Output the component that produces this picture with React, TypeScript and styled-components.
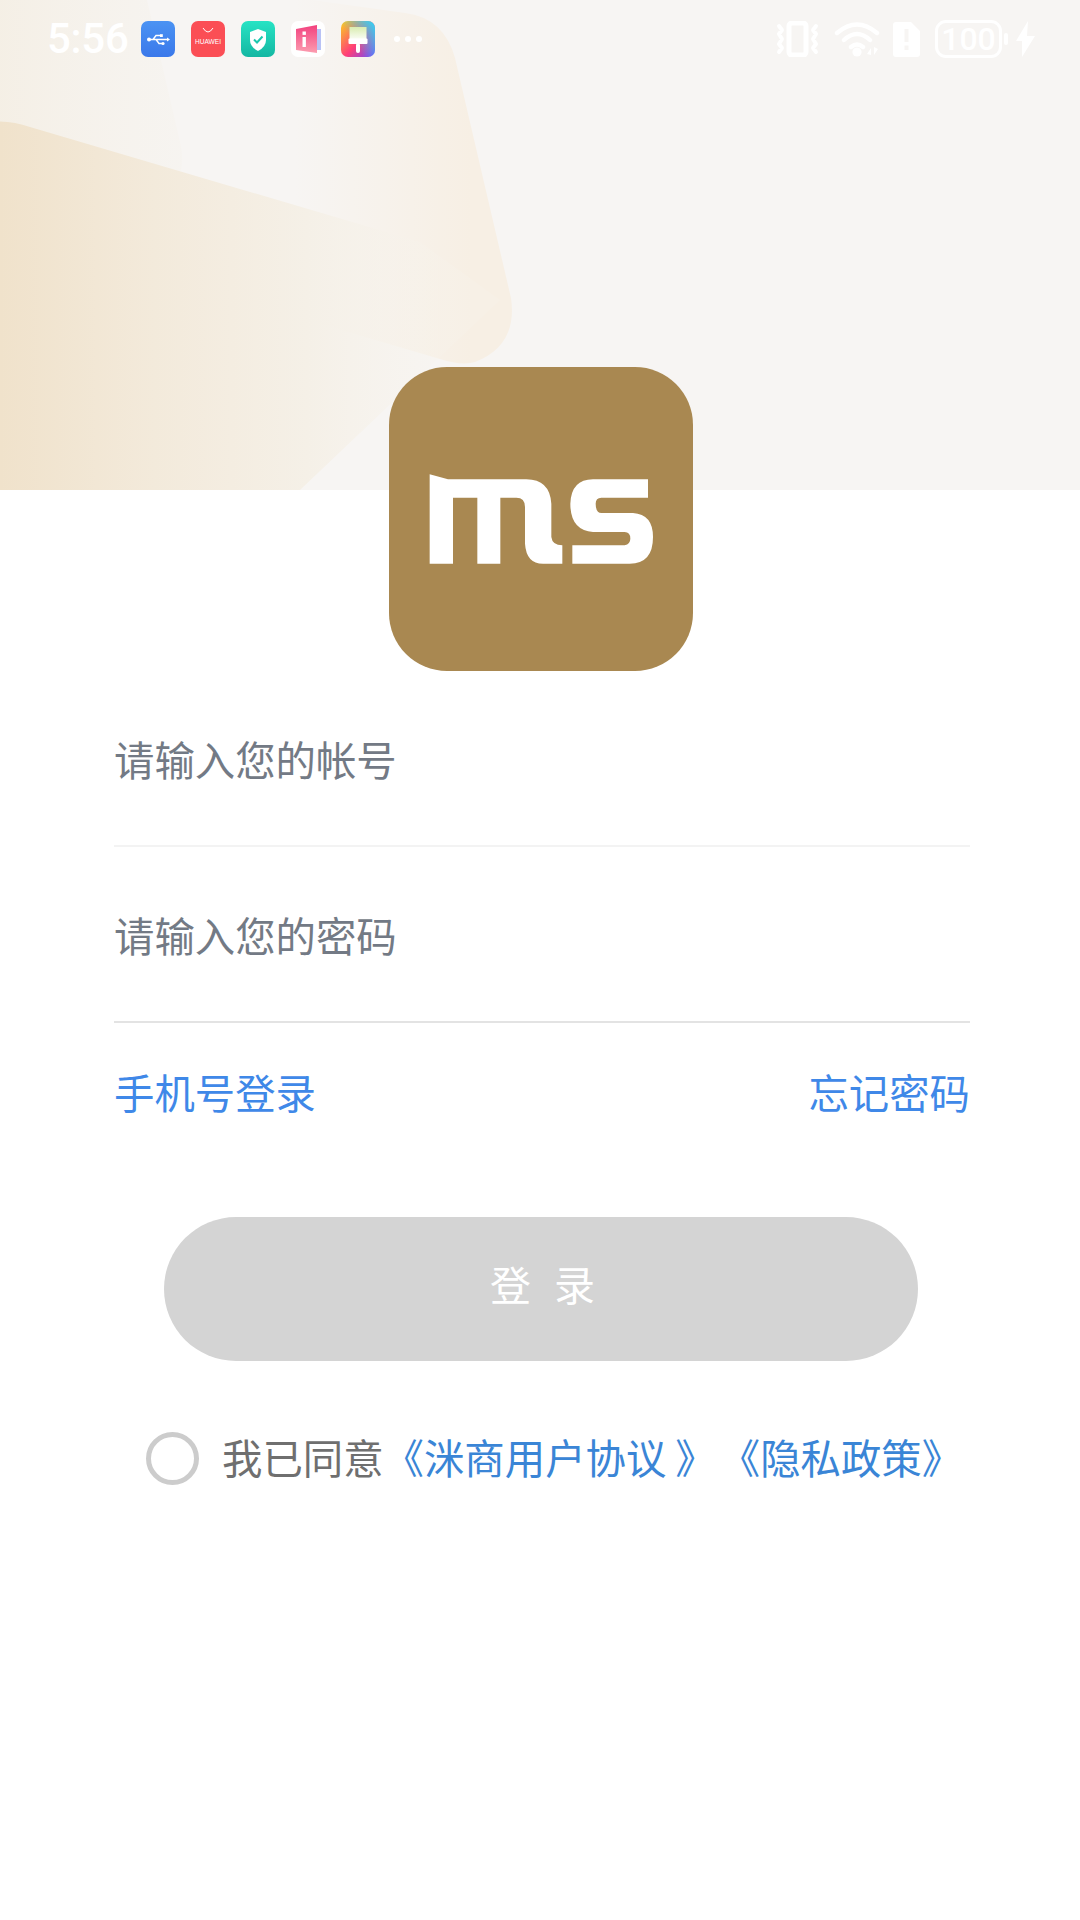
import React from 'react'
import styled, { createGlobalStyle } from 'styled-components'

const GlobalStyle = createGlobalStyle`
  html, body {
    margin: 0;
    padding: 0;
    background: #fff;
  }
  * {
    box-sizing: border-box;
  }
`

const Page = styled.div`
  width: 1080px;
  height: 1920px;
  background: #fff;
  overflow: hidden;
  font-family: "Noto Sans CJK SC", "Noto Sans", sans-serif;
`

const Hero = styled.div`
  position: relative;
  height: 490px;
  background: #f7f5f3;
  overflow: hidden;
`

const HeroArt = styled.svg`
  position: absolute;
  left: 0;
  top: 0;
`

const StatusBar = styled.div`
  position: relative;
  display: flex;
  justify-content: space-between;
  align-items: center;
  height: 78px;
  padding: 0 45px 0 47px;
`

const StatusLeft = styled.div`
  display: flex;
  align-items: center;
`

const StatusRight = styled.div`
  display: flex;
  align-items: center;
`

const Time = styled.span`
  width: 94px;
  font-family: Roboto, sans-serif;
  font-size: 42px;
  font-weight: 500;
  line-height: 78px;
  letter-spacing: -0.3px;
  color: #fff;
`

const AppIcons = styled.div`
  display: flex;
  align-items: center;
  gap: 16px;
`

const Dots = styled.div`
  display: flex;
  gap: 5px;
  margin-left: 19px;
`

const Dot = styled.i`
  width: 6px;
  height: 6px;
  border-radius: 50%;
  background: #fff;
`

const Battery = styled.div`
  display: flex;
  align-items: center;
  justify-content: center;
  width: 67px;
  height: 38px;
  margin-left: 15px;
  border: 3px solid #fff;
  border-radius: 11px;
  font-family: Roboto, sans-serif;
  font-size: 32px;
  font-weight: 500;
  line-height: 1;
  color: #fff;
`

const BatteryNub = styled.i`
  width: 4px;
  height: 12px;
  margin: 0 8px 0 2px;
  border-radius: 2px;
  background: #fff;
`

const LogoBox = styled.div`
  width: 304px;
  height: 304px;
  margin: -123px 0 0 389px;
  position: relative;
  border-radius: 58px;
  background: #a98851;
`

const Form = styled.div`
  padding: 0 110px 0 114px;
`

const Field = styled.div<{ $line: string }>`
  display: flex;
  align-items: center;
  height: 176px;
  padding-bottom: 0;
  border-bottom: 2px solid ${({ $line }) => $line};
  font-size: 40.4px;
  color: #737a85;
`

const LinkRow = styled.div`
  display: flex;
  justify-content: space-between;
  align-items: center;
  height: 140px;
  padding-bottom: 4px;
  font-size: 40.4px;
  color: #3f88e8;
`

const LoginButton = styled.div`
  display: flex;
  align-items: center;
  justify-content: center;
  width: 754px;
  height: 144px;
  margin: 54px 0 0 164px;
  padding: 0 0 12px 10px;
  border-radius: 72px;
  background: #d4d4d4;
  font-size: 41px;
  letter-spacing: 7px;
  white-space: pre;
  color: #fff;
`

const Agreement = styled.div`
  display: flex;
  align-items: center;
  height: 60px;
  margin-top: 68px;
  padding-left: 146px;
  font-size: 40.4px;
  white-space: pre;
  color: #6f6f6f;
`

const Radio = styled.span`
  width: 53px;
  height: 53px;
  margin: 0 23px 1px 0;
  border: 5px solid #cccccc;
  border-radius: 50%;
`

const Terms = styled.span<{ $gap?: number }>`
  margin-left: ${({ $gap }) => $gap ?? 0}px;
  margin-bottom: 5px;
  color: #3a85d6;
`

const Consent = styled.span`
  margin-bottom: 5px;
`

const Art = () => (
  <HeroArt width="1080" height="490" viewBox="0 0 1080 490">
    <defs>
      <linearGradient id="bandRight" x1="0" x2="1" y1="0" y2="0">
        <stop offset="0.2" stopColor="#f7efe4" stopOpacity="0" />
        <stop offset="0.85" stopColor="#f7efe4" stopOpacity="1" />
      </linearGradient>
      <linearGradient id="bandLeft" x1="0" x2="1" y1="0" y2="0">
        <stop offset="0" stopColor="#f4eee3" stopOpacity="1" />
        <stop offset="1" stopColor="#f6f3ee" stopOpacity="0.55" />
      </linearGradient>
      <linearGradient id="bandBig" gradientUnits="userSpaceOnUse" x1="0" x2="440" y1="0" y2="0">
        <stop offset="0" stopColor="#f0e2cb" stopOpacity="1" />
        <stop offset="0.35" stopColor="#f3eadb" stopOpacity="1" />
        <stop offset="0.7" stopColor="#f5f0e7" stopOpacity="1" />
        <stop offset="1" stopColor="#f7f3ec" stopOpacity="0.25" />
      </linearGradient>
    </defs>
    <path d="M-30 0 H147 L180 142 Q192 190 140 206 Q120 210 90 205 L-30 180 Z" fill="url(#bandLeft)" />
    <path d="M240 -10 L405 13 Q444 18 455 58 L511 298 Q518 345 475 362 Q462 366 440 359 L240 300 Z" fill="url(#bandRight)" />
    <path d="M-10 122 Q10 120 30 127 L420 242 L500 300 L300 490 L-10 490 Z" fill="url(#bandBig)" />
  </HeroArt>
)

const UsbIcon = () => (
  <svg width="34" height="36" viewBox="0 0 34 36">
    <defs>
      <linearGradient id="usbBg" x1="0" x2="0" y1="0" y2="1">
        <stop offset="0" stopColor="#4b93f3" />
        <stop offset="1" stopColor="#3a78ea" />
      </linearGradient>
    </defs>
    <rect width="34" height="36" rx="7" fill="url(#usbBg)" />
    <path d="M8 18.5 H27 M12 18.5 L15 14.5 H19 M15 18.5 L18 22.5 H21" fill="none" stroke="#fff" strokeWidth="1.4" />
    <circle cx="8" cy="18.5" r="2" fill="#fff" />
    <rect x="19" y="13.2" width="2.8" height="2.8" fill="#fff" />
    <circle cx="22" cy="22.5" r="1.6" fill="#fff" />
    <path d="M26 16.5 L29 18.5 L26 20.5 Z" fill="#fff" />
  </svg>
)

const HuaweiIcon = () => (
  <svg width="34" height="36" viewBox="0 0 34 36">
    <rect width="34" height="36" rx="7" fill="#fb4e55" />
    <path d="M12 7 Q17 15 22 7" fill="none" stroke="#fff" strokeWidth="1" />
    <text x="17" y="23" textAnchor="middle" fontFamily="Liberation Sans, sans-serif" fontSize="6.6" fill="#fff">
      HUAWEI
    </text>
  </svg>
)

const ShieldIcon = () => (
  <svg width="34" height="36" viewBox="0 0 34 36">
    <defs>
      <linearGradient id="shieldBg" x1="0" x2="0" y1="0" y2="1">
        <stop offset="0" stopColor="#26e3c4" />
        <stop offset="1" stopColor="#14b7a2" />
      </linearGradient>
    </defs>
    <rect width="34" height="36" rx="7" fill="url(#shieldBg)" />
    <path d="M17 8 L25 11 V19 Q25 26 17 30 Q9 26 9 19 V11 Z" fill="#fff" />
    <path d="M13 18.5 L16 21.5 L21.5 15.5" fill="none" stroke="#1cc7ae" strokeWidth="2" />
  </svg>
)

const InfoIcon = () => (
  <svg width="34" height="36" viewBox="0 0 34 36">
    <defs>
      <linearGradient id="infoBg" x1="0" x2="0" y1="0" y2="1">
        <stop offset="0" stopColor="#f2417f" />
        <stop offset="1" stopColor="#fc9db0" />
      </linearGradient>
    </defs>
    <rect width="34" height="36" rx="7" fill="#fff" />
    <path d="M26 8 H30 V29 H26 Z" fill="#b9c2f5" />
    <path d="M5 8 L26 4 V32 L5 29 Z" fill="url(#infoBg)" />
    <rect x="11.5" y="16" width="3.4" height="10" fill="#fff" />
    <rect x="11.5" y="10.5" width="3.4" height="3.4" fill="#fff" />
  </svg>
)

const BrushIcon = () => (
  <svg width="34" height="36" viewBox="0 0 34 36">
    <defs>
      <linearGradient id="brushA" x1="0" x2="1" y1="0" y2="1">
        <stop offset="0" stopColor="#f9d020" />
        <stop offset="0.55" stopColor="#ff3e78" />
        <stop offset="1" stopColor="#6a4cff" />
      </linearGradient>
      <linearGradient id="brushB" x1="1" x2="0.3" y1="0" y2="0.5">
        <stop offset="0" stopColor="#22dcff" />
        <stop offset="1" stopColor="#22dcff" stopOpacity="0" />
      </linearGradient>
      <linearGradient id="brushHead" x1="0" x2="0" y1="0" y2="1">
        <stop offset="0" stopColor="#d9ecb0" />
        <stop offset="1" stopColor="#ffffff" />
      </linearGradient>
    </defs>
    <rect width="34" height="36" rx="7" fill="url(#brushA)" />
    <rect width="34" height="36" rx="7" fill="url(#brushB)" />
    <rect x="8.5" y="6" width="17" height="14" fill="url(#brushHead)" />
    <rect x="7.5" y="17.5" width="19" height="5.5" rx="1" fill="#fff" />
    <rect x="15" y="22" width="4" height="10" rx="2" fill="#fff" />
  </svg>
)

const VibrateIcon = () => (
  <svg width="43" height="36" viewBox="0 0 43 36">
    <rect x="13" y="2" width="17" height="32" rx="3" fill="none" stroke="#fff" strokeWidth="5" />
    <path
      d="M3 5 L6 9 L3 13 L6 18 L3 23 L6 27 L3 31 M40 5 L37 9 L40 13 L37 18 L40 23 L37 27 L40 31"
      fill="none"
      stroke="#fff"
      strokeWidth="4"
      strokeLinejoin="round"
      strokeLinecap="round"
    />
  </svg>
)

const WifiIcon = () => (
  <svg width="46" height="36" viewBox="0 0 46 36" style={{ marginLeft: 15 }}>
    <path
      d="M3 12 Q23 -5 43 12 M10 19 Q23 7 36 19 M17 26 Q23 21 29 26"
      fill="none"
      stroke="#fff"
      strokeWidth="4.4"
      strokeLinecap="round"
    />
    <circle cx="23" cy="31" r="4.6" fill="#fff" />
    <path d="M33 33 L37 27 V34 Z M40 26 L40 34 L44 28 Z" fill="#fff" />
  </svg>
)

const SimIcon = () => (
  <svg width="27" height="35" viewBox="0 0 27 35" style={{ marginLeft: 13 }}>
    <path
      fillRule="evenodd"
      d="M3 0 H18 L27 9 V32 Q27 35 24 35 H3 Q0 35 0 32 V3 Q0 0 3 0 Z M11.5 7 V20 H15.5 V7 Z M11.5 23.5 V28 H15.5 V23.5 Z"
      fill="#fff"
    />
  </svg>
)

const BoltIcon = () => (
  <svg width="19" height="36" viewBox="0 0 19 36">
    <path d="M12 0 L0 20 H6 L6 36 L19 15 H11 Z" fill="#fff" />
  </svg>
)

const LogoMark = () => (
  <svg width="304" height="304" viewBox="28 20 912 912">
    <path
      d="M150 342 L205 357 H440 Q510 357 515 430 V530 Q518 555 548 555 V610 H490 Q440 610 436 550 V440 Q436 412 410 412 H362 V610 H293 V412 H220 V610 H150 Z"
      fill="#fff"
    />
    <path
      d="M805 357 H640 Q575 357 572 430 Q572 510 640 515 H735 Q752 515 752 535 Q752 550 735 555 H578 V610 H750 Q820 610 820 530 Q820 462 760 458 H665 Q648 458 648 430 Q648 412 665 412 H805 Z"
      fill="#fff"
    />
  </svg>
)

export default function App() {
  return (
    <Page>
      <GlobalStyle />
      <Hero>
        <Art />
        <StatusBar>
          <StatusLeft>
            <Time>5:56</Time>
            <AppIcons>
              <UsbIcon />
              <HuaweiIcon />
              <ShieldIcon />
              <InfoIcon />
              <BrushIcon />
            </AppIcons>
            <Dots>
              <Dot />
              <Dot />
              <Dot />
            </Dots>
          </StatusLeft>
          <StatusRight>
            <VibrateIcon />
            <WifiIcon />
            <SimIcon />
            <Battery>100</Battery>
            <BatteryNub />
            <BoltIcon />
          </StatusRight>
        </StatusBar>
      </Hero>
      <LogoBox>
        <LogoMark />
      </LogoBox>
      <Form>
        <Field $line="#f3f3f3">请输入您的帐号</Field>
        <Field $line="#e3e3e3">请输入您的密码</Field>
        <LinkRow>
          <span>手机号登录</span>
          <span>忘记密码</span>
        </LinkRow>
      </Form>
      <LoginButton>登 录</LoginButton>
      <Agreement>
        <Radio />
        <Consent>我已同意</Consent>
        <Terms>《洣商用户协议 》</Terms>
        <Terms $gap={4}>《隐私政策》</Terms>
      </Agreement>
    </Page>
  )
}
